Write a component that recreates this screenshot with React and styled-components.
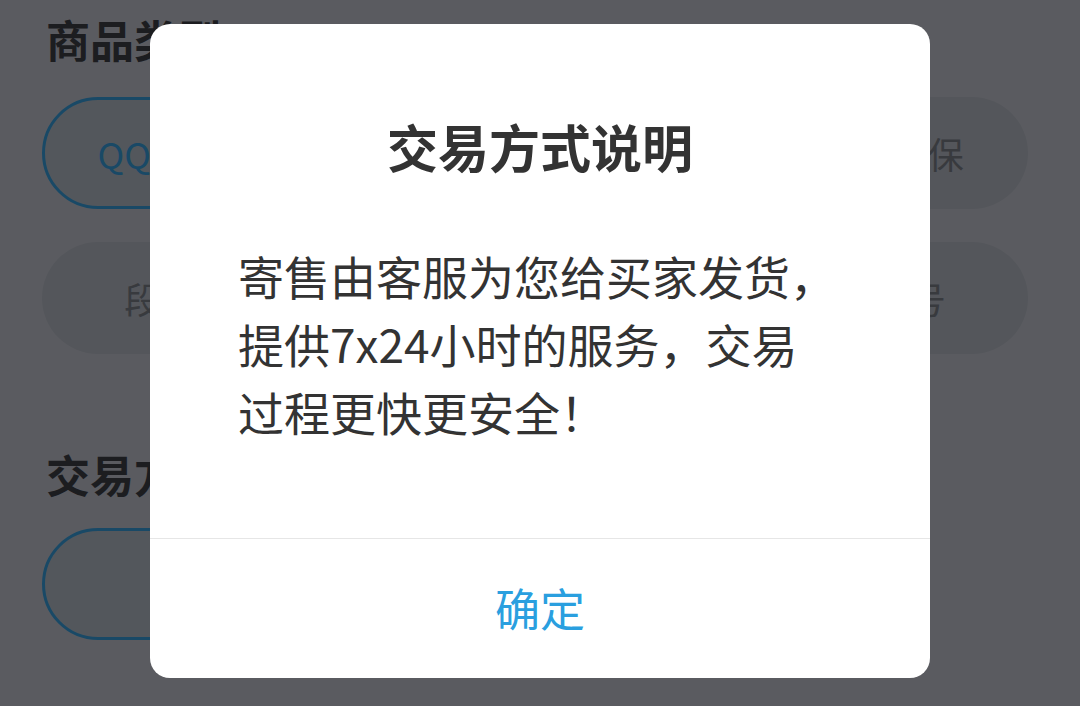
import React from 'react'
import styled, { createGlobalStyle } from 'styled-components'

const GlobalStyle = createGlobalStyle`
html, body {
  margin:0;
  padding:0;
  background:#e2e4f0;
}
body {
  font-family:"Noto Sans CJK SC", "Noto Sans", sans-serif;
}
* { box-sizing:border-box; }
`

const Page = styled.div`
position:relative;
width:1080px;
height:706px;
overflow:hidden;
background:#e2e4f0;
padding:9px 52px 0 42px;
`

const Heading = styled.h2`
margin:0;
padding-left:4px;
font-size:44px;
line-height:60px;
font-weight:700;
color:#474952;
`

const PillGrid = styled.div`
display:grid;
grid-template-columns:repeat(3, 1fr);
column-gap:30px;
row-gap:33px;
margin:${({top}) => top || 28}px 0 90px;
`

const Pill = styled.div`
height:112px;
border-radius:56px;
display:flex;
align-items:center;
justify-content:center;
font-size:36px;
color:${({active}) => active ? '#3fb6ff' : '#8c919c'};
background:${({active}) => active ? '#cfd9e6' : '#d1d7e3'};
border:3px solid ${({active}) => active ? '#3fb6ff' : 'transparent'};
`

const Overlay = styled.div`
position:absolute;
inset:0;
background:rgba(0,0,0,0.6);
display:flex;
justify-content:center;
align-items:flex-start;
padding-top:24px;
`

const Dialog = styled.div`
width:780px;
height:654px;
background:#fff;
border-radius:20px;
display:flex;
flex-direction:column;
overflow:hidden;
`

const Content = styled.div`
flex:1;
padding:92px 60px 0 88px;
`

const Title = styled.h1`
margin:0 0 65px;
padding-right:28px;
text-align:center;
font-size:51px;
line-height:60px;
font-weight:700;
color:#333;
`

const Message = styled.p`
margin:0;
font-size:46px;
line-height:68px;
color:#333;
white-space:nowrap;
`

const Footer = styled.div`
height:140px;
border-top:1px solid #e6e6e6;
display:flex;
align-items:center;
justify-content:center;
padding-bottom:2px;
`

const ConfirmButton = styled.button`
background:none;
border:none;
padding:0;
font-family:inherit;
font-size:45px;
color:#2a9fdf;
cursor:pointer;
`

const goodsTypes = ['QQ游戏账号', '微信账号', '成品号担保', '段位代练', '装备道具', '其他账号']
const tradeTypes = ['寄售', '担保']

export default function App() {
  return (
    <>
      <GlobalStyle/>
      <Page>
        <Heading>商品类型</Heading>
        <PillGrid>
          {goodsTypes.map((t, i) => (
            <Pill key={t} active={i === 0}>{t}</Pill>
          ))}
        </PillGrid>
        <Heading>交易方式</Heading>
        <PillGrid top={24}>
          {tradeTypes.map((t, i) => (
            <Pill key={t} active={i === 0}>{t}</Pill>
          ))}
        </PillGrid>

        <Overlay>
          <Dialog>
            <Content>
              <Title>交易方式说明</Title>
              <Message>
                寄售由客服为您给买家发货，<br/>
                提供7x24小时的服务，交易<br/>
                过程更快更安全！
              </Message>
            </Content>
            <Footer>
              <ConfirmButton>确定</ConfirmButton>
            </Footer>
          </Dialog>
        </Overlay>
      </Page>
    </>
  )
}
